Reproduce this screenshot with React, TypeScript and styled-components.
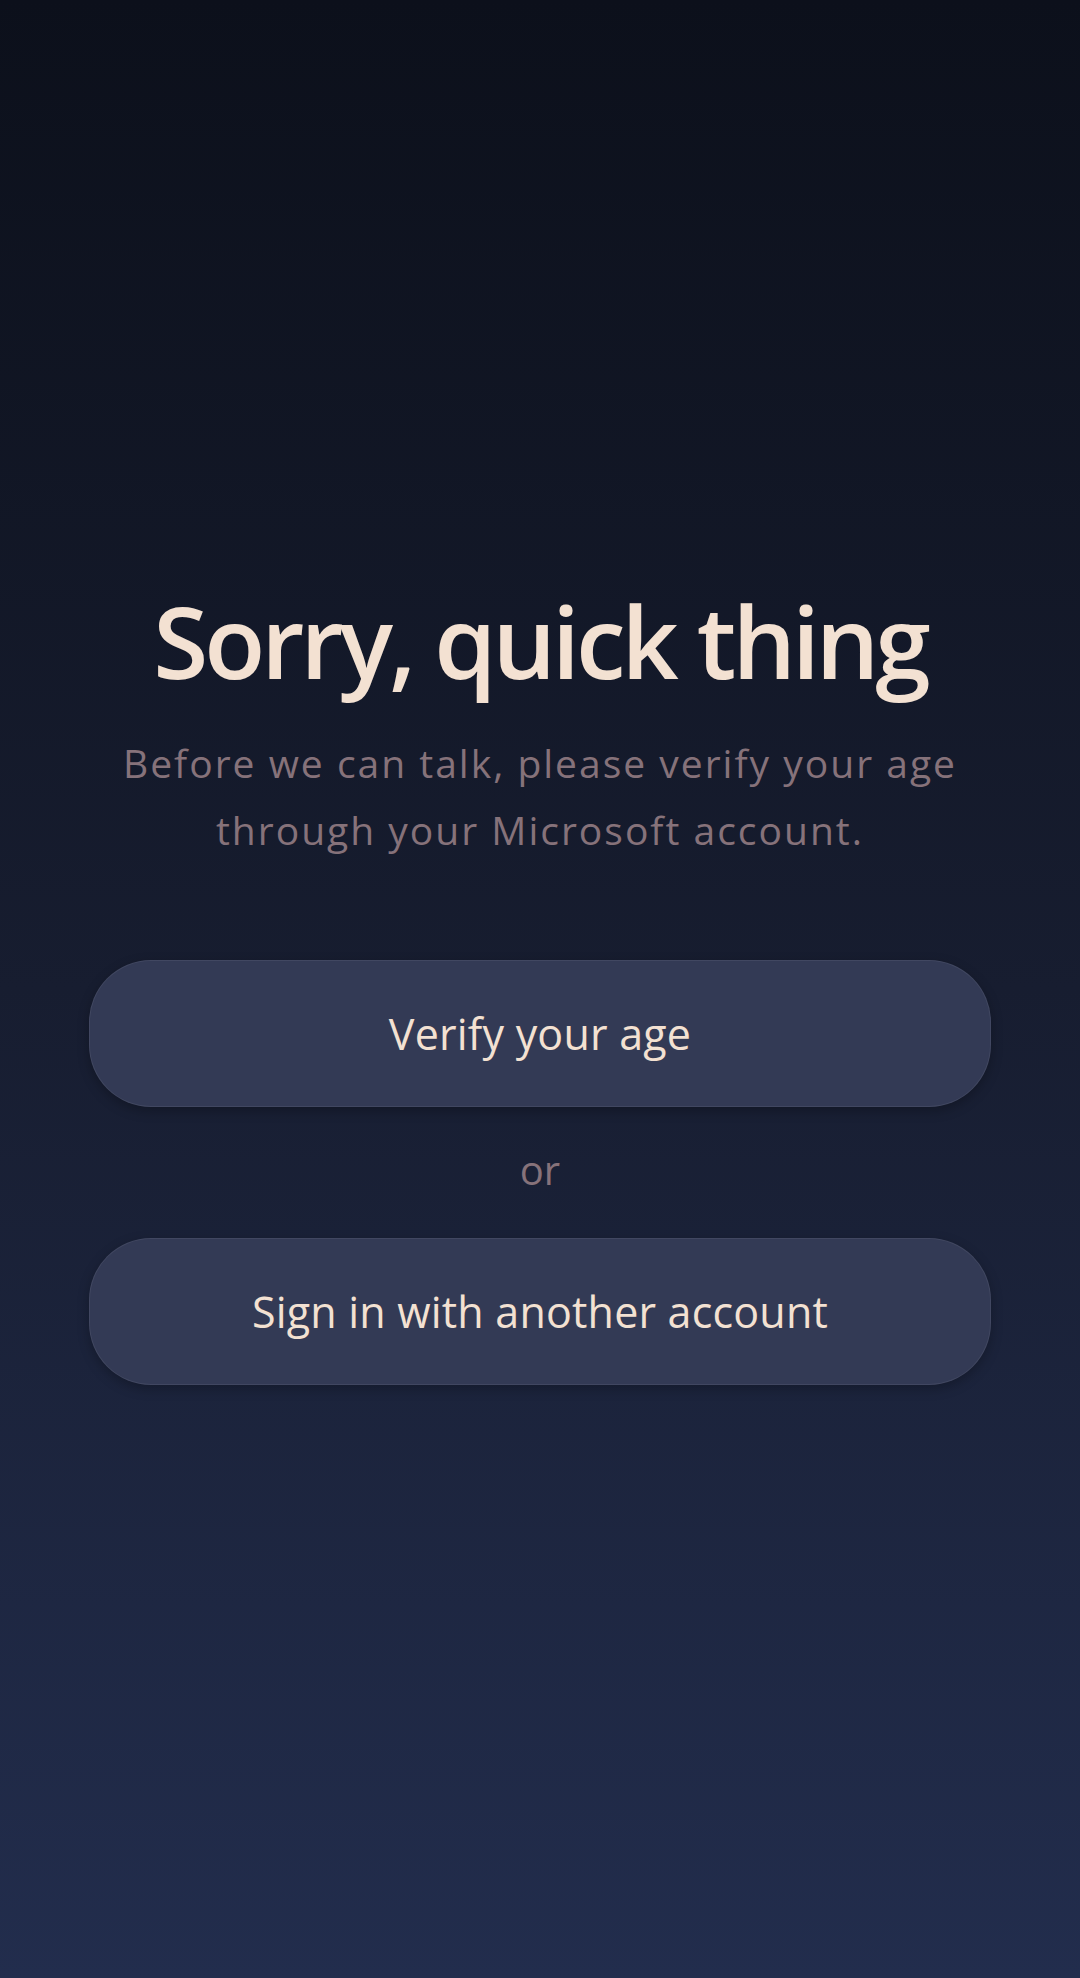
import React from "react";
import styled, { createGlobalStyle } from "styled-components";

const Global = createGlobalStyle`
  html, body { margin: 0; padding: 0; }
  body {
    font-family: "Open Sans", "Noto Sans", sans-serif;
    background: #0c101b;
  }
  * { box-sizing: border-box; }
`;

const Page = styled.main`
  min-height: 1978px;
  display: flex;
  flex-direction: column;
  align-items: center;
  justify-content: center;
  padding: 0 89px 14px;
  background: linear-gradient(180deg, #0c101b 0%, #171d30 50%, #222d4d 100%);
`;

const Title = styled.h1`
  margin: 0;
  font-size: 100px;
  line-height: 120px;
  font-weight: 600;
  letter-spacing: -4px;
  color: #f3e1d2;
  text-align: center;
`;

const Subtitle = styled.p`
  margin: 29px 0 0;
  font-size: 39px;
  line-height: 67px;
  font-weight: 400;
  letter-spacing: 2px;
  color: #86727a;
  text-align: center;
`;

const Actions = styled.div`
  width: 100%;
  margin-top: 97px;
  display: flex;
  flex-direction: column;
  align-items: stretch;
`;

const PillButton = styled.button`
  height: 147px;
  width: 100%;
  border-radius: 62px;
  border: 1px solid rgba(255, 255, 255, 0.07);
  background: #333a55;
  color: #f3e1d2;
  font-family: inherit;
  font-size: 43px;
  font-weight: 400;
  letter-spacing: 0.2px;
  box-shadow: 0 4px 12px rgba(0, 0, 0, 0.25);
  cursor: pointer;
`;

const Divider = styled.div`
  margin: 39px 0 44px;
  font-size: 40px;
  line-height: 48px;
  color: #86727a;
  text-align: center;
`;

export default function App() {
  return (
    <>
      <Global />
      <Page>
        <Title>Sorry, quick thing</Title>
        <Subtitle>
          Before we can talk, please verify your age
          <br />
          through your Microsoft account.
        </Subtitle>
        <Actions>
          <PillButton>Verify your age</PillButton>
          <Divider>or</Divider>
          <PillButton>Sign in with another account</PillButton>
        </Actions>
      </Page>
    </>
  );
}
